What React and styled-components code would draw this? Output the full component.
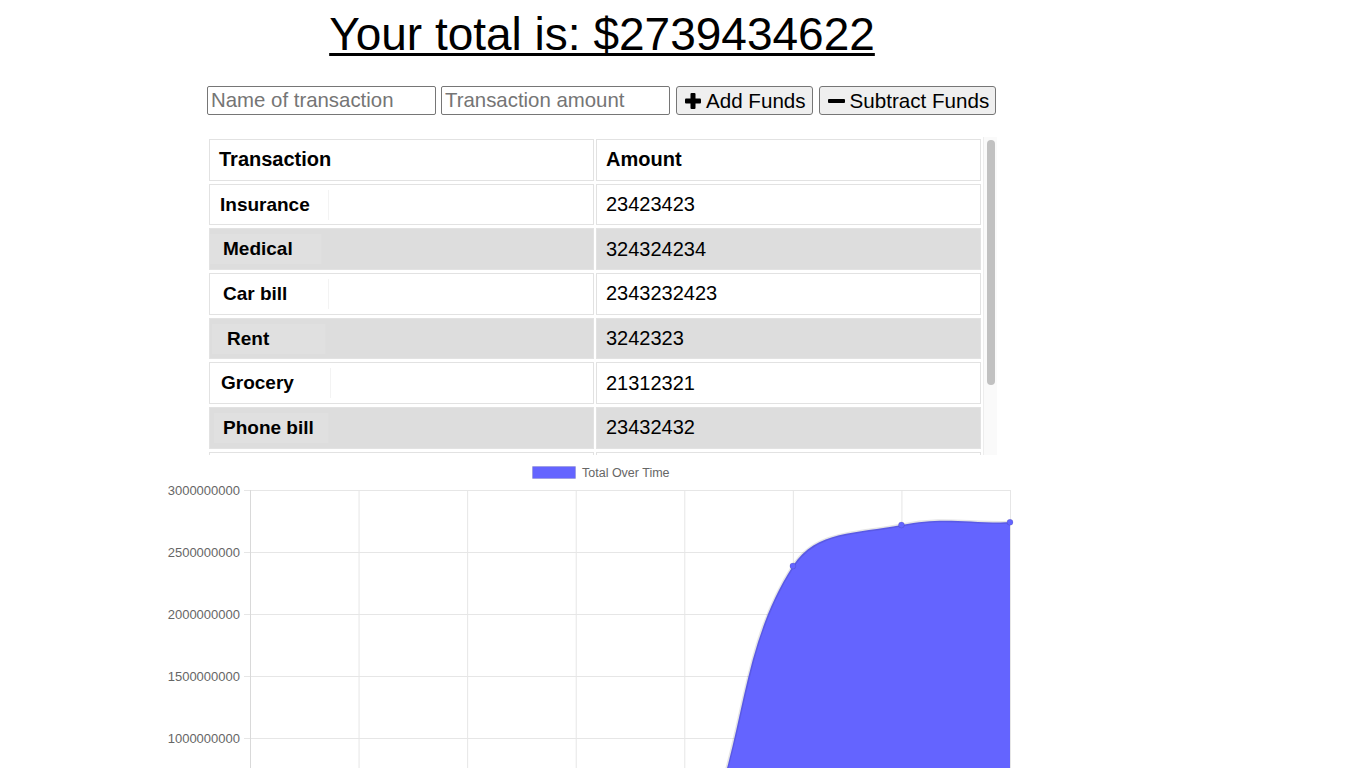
import React from "react";
import styled, { createGlobalStyle } from "styled-components";

const GlobalStyle = createGlobalStyle`
	html, body {
		margin: 0;
		padding: 0;
		background: #fff;
		overflow: hidden;
	}
	body {
		font-family: "Liberation Sans", Arial, Helvetica, sans-serif;
		color: #000;
	}
`;

const Column = styled.div`
	width: 790px;
	margin-left: 207px;
	display: flex;
	flex-direction: column;
`;

const Title = styled.h1`
	margin: 8px 0 0;
	font-size: 46px;
	font-weight: 400;
	line-height: 53px;
	text-align: center;
	text-decoration: underline;
	text-decoration-thickness: 3px;
	text-underline-offset: 3px;
`;

const Form = styled.div`
	display: flex;
	gap: 5px;
	margin-top: 25px;
`;

const Input = styled.input`
	box-sizing: border-box;
	flex-shrink: 0;
	width: 229px;
	height: 29px;
	padding: 0 3px;
	border: 1px solid #767676;
	border-radius: 2px;
	font-family: inherit;
	font-size: 20.4px;
	color: #000;
	&::placeholder {
		color: #757575;
	}
`;

const Button = styled.button`
	box-sizing: border-box;
	flex-shrink: 0;
	height: 29px;
	margin-left: 1px;
	padding: 0 6px 0 8px;
	display: flex;
	align-items: center;
	gap: 5px;
	white-space: nowrap;
	background: #efefef;
	border: 1px solid #767676;
	border-radius: 3px;
	font-family: inherit;
	font-size: 20.6px;
	color: #000;
	cursor: pointer;
`;

const ScrollFrame = styled.div`
	margin-top: 22px;
	height: 318px;
	display: flex;
`;

const Scroller = styled.div`
	flex: 1;
	overflow: hidden;
`;

const Track = styled.div`
	box-sizing: border-box;
	width: 14px;
	padding: 3px 2px 0 3px;
	background: #fafafa;
	border-left: 1px solid #ededed;
`;

const Thumb = styled.div`
	height: ${(p) => p.$size}px;
	border-radius: 4px;
	background: #c1c1c1;
`;

const Table = styled.table`
	width: 100%;
	border-collapse: separate;
	border-spacing: 2px 3px;
	margin-top: -1px;
	table-layout: fixed;
`;

const Row = styled.tr`
	background: ${(p) => (p.$shaded ? "#dddddd" : "#ffffff")};
`;

const Head = styled.th`
	height: 41.7px;
	box-sizing: border-box;
	padding: 0 9px;
	border: 1px solid #e2e2e2;
	background: #fff;
	text-align: left;
	font-size: 20px;
	font-weight: 700;
`;

const Cell = styled.td`
	height: 41.7px;
	box-sizing: border-box;
	padding: 0 9px;
	border: 1px solid #e2e2e2;
	font-size: 20px;
	vertical-align: middle;
`;

const NameCell = styled(Cell)`
	padding: 0;
`;

const NameTag = styled.span`
	display: flex;
	align-items: center;
	box-sizing: border-box;
	width: ${(p) => p.$w}px;
	height: 30px;
	margin-left: ${(p) => p.$shift}px;
	padding-left: ${(p) => p.$indent}px;
	background: ${(p) => (p.$shaded ? "#e0e0e0" : "#ffffff")};
	border-right: 1px solid ${(p) => (p.$shaded ? "#dedede" : "#f3f3f3")};
	font-size: 19px;
	font-weight: 700;
`;

const ChartPanel = styled.div`
	height: 313px;
	svg {
		display: block;
	}
`;

const PlusIcon = () => (
	<svg width="16" height="16" viewBox="0 0 16 16">
		<rect x="0" y="5.5" width="16" height="5" rx="1" fill="#000" />
		<rect x="5.5" y="0" width="5" height="16" rx="1" fill="#000" />
	</svg>
);

const MinusIcon = () => (
	<svg width="17" height="16" viewBox="0 0 17 16">
		<rect x="0" y="6" width="17" height="4" rx="1" fill="#000" />
	</svg>
);

const transactions = [
	{ name: "Insurance", amount: "23423423", indent: 10, shift: 0, w: 119 },
	{ name: "Medical", amount: "324324234", indent: 13, shift: 0, w: 112 },
	{ name: "Car bill", amount: "2343232423", indent: 13, shift: 0, w: 119 },
	{ name: "Rent", amount: "3242323", indent: 15, shift: 2, w: 114 },
	{ name: "Grocery", amount: "21312321", indent: 8, shift: 3, w: 118 },
	{ name: "Phone bill", amount: "23432432", indent: 9, shift: 4, w: 115 },
	{ name: "Gas", amount: "234233", indent: 10, shift: 0, w: 116 },
	{ name: "Water bill", amount: "233233", indent: 10, shift: 0, w: 118 },
];

// chart geometry, in page pixels (svg starts at y = 455)
const OFFSET = 455;
const LEFT = 250;
const RIGHT = 1010;
const TOP = 490 - OFFSET;
const BOTTOM = 862 - OFFSET;
const PX_PER_BILLION = 124;
const values = [0, 0, 0, 0, 0, 2387000000, 2718000000, 2739434622];
const ticks = [3000000000, 2500000000, 2000000000, 1500000000, 1000000000, 500000000, 0];
const BLUE = "#6464ff";
const GRID = "#e6e6e6";

const yOf = (v) => BOTTOM - (v / 1e9) * PX_PER_BILLION;

function buildCurve() {
	const step = (RIGHT - LEFT) / (values.length - 1);
	const pts = values.map((v, i) => ({ x: LEFT + i * step, y: yOf(v) }));
	const cap = (n, min, max) => Math.max(Math.min(n, max), min);
	const ctrl = pts.map((cur, i) => {
		const prev = pts[i - 1] || cur;
		const next = pts[i + 1] || cur;
		const d01 = Math.hypot(cur.x - prev.x, cur.y - prev.y);
		const d12 = Math.hypot(next.x - cur.x, next.y - cur.y);
		let s01 = d01 / (d01 + d12);
		let s12 = d12 / (d01 + d12);
		if (isNaN(s01)) s01 = 0;
		if (isNaN(s12)) s12 = 0;
		const fa = 0.4 * s01;
		const fb = 0.4 * s12;
		return {
			prev: {
				x: cap(cur.x - fa * (next.x - prev.x), LEFT, RIGHT),
				y: cap(cur.y - fa * (next.y - prev.y), TOP, BOTTOM),
			},
			next: {
				x: cap(cur.x + fb * (next.x - prev.x), LEFT, RIGHT),
				y: cap(cur.y + fb * (next.y - prev.y), TOP, BOTTOM),
			},
		};
	});
	let d = `M${pts[0].x},${pts[0].y}`;
	for (let i = 1; i < pts.length; i++) {
		const a = ctrl[i - 1].next;
		const b = ctrl[i].prev;
		d += ` C${a.x},${a.y} ${b.x},${b.y} ${pts[i].x},${pts[i].y}`;
	}
	const area = `${d} L${pts[pts.length - 1].x},${BOTTOM} L${pts[0].x},${BOTTOM} Z`;
	return { pts, line: d, area, step };
}

function Chart() {
	const { pts, line, area, step } = buildCurve();
	return (
		<ChartPanel>
			<svg width="1366" height="313" viewBox="0 0 1366 313">
				<g fontFamily='"Liberation Sans", Arial, sans-serif'>
					<rect x="532.5" y="11.5" width="43" height="12" fill={BLUE} stroke="rgba(0,0,0,0.1)" />
					<text x="582" y="22" fontSize="12.5" fill="#666">
						Total Over Time
					</text>
					{ticks.map((t, k) => {
						const y = TOP + k * 62;
						return (
							<g key={t}>
								<line x1="244" x2={RIGHT} y1={y + 0.5} y2={y + 0.5} stroke={GRID} />
								<text x="240" y={y + 5} fontSize="13" fill="#666" textAnchor="end">
									{t}
								</text>
							</g>
						);
					})}
					{values.map((_, i) => (
						<line
							key={i}
							x1={LEFT + i * step + 0.5}
							x2={LEFT + i * step + 0.5}
							y1={TOP}
							y2={BOTTOM + 6}
							stroke={i === 0 ? "#d9d9d9" : GRID}
						/>
					))}
					<path d={area} fill={BLUE} />
					<path d={line} fill="none" stroke="rgba(0,0,0,0.1)" strokeWidth="3" />
					{pts.map((p, i) => (
						<circle key={i} cx={p.x} cy={p.y} r="3" fill={BLUE} stroke="rgba(0,0,0,0.1)" />
					))}
				</g>
			</svg>
		</ChartPanel>
	);
}

export default function App() {
	return (
		<>
			<GlobalStyle />
			<Column>
				<Title>Your total is: $2739434622</Title>
				<Form>
					<Input placeholder="Name of transaction" />
					<Input placeholder="Transaction amount" />
					<Button>
						<PlusIcon />
						Add Funds
					</Button>
					<Button>
						<MinusIcon />
						Subtract Funds
					</Button>
				</Form>
				<ScrollFrame>
					<Scroller>
						<Table>
							<thead>
								<tr>
									<Head>Transaction</Head>
									<Head>Amount</Head>
								</tr>
							</thead>
							<tbody>
								{transactions.map((t, i) => (
									<Row key={t.name} $shaded={i % 2 === 1}>
										<NameCell>
											<NameTag $indent={t.indent} $shift={t.shift} $w={t.w} $shaded={i % 2 === 1}>
												{t.name}
											</NameTag>
										</NameCell>
										<Cell>{t.amount}</Cell>
									</Row>
								))}
							</tbody>
						</Table>
					</Scroller>
					<Track>
						<Thumb $size={245} />
					</Track>
				</ScrollFrame>
			</Column>
			<Chart />
		</>
	);
}
